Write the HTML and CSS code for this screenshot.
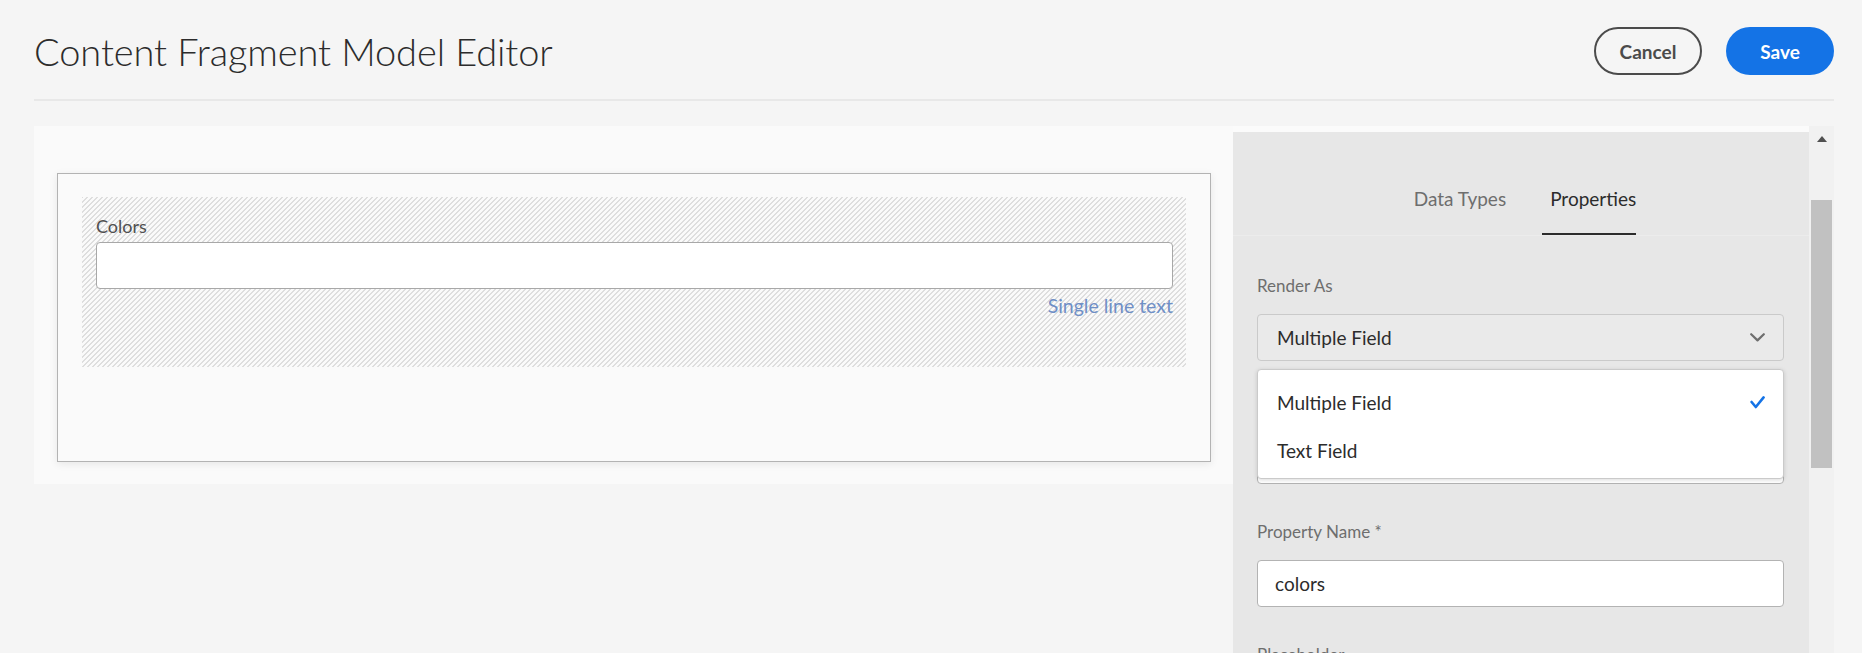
FILE: index.html
```html
<!DOCTYPE html>
<html lang="en">
<head>
<meta charset="utf-8">
<title>Content Fragment Model Editor</title>
<link rel="stylesheet" href="styles.css">
</head>
<body>
<div class="app">
  <header class="topbar">
    <h1 class="title">Content Fragment Model Editor</h1>
    <div class="actions">
      <button class="btn btn-secondary">Cancel</button>
      <button class="btn btn-primary">Save</button>
    </div>
  </header>
  <main class="workspace">
    <section class="canvas">
      <div class="model-card">
        <div class="field-drop">
          <div class="field-label">Colors</div>
          <div class="field-preview"></div>
          <div class="field-type">Single line text</div>
        </div>
      </div>
    </section>
    <aside class="panel">
      <nav class="tabs">
        <div class="tab">Data Types</div>
        <div class="tab tab-active">Properties</div>
      </nav>
      <div class="panel-body">
        <div class="form-field">
          <div class="form-label">Render As</div>
          <div class="select-wrap">
            <div class="select">
              <span>Multiple Field</span>
              <svg class="chevron" width="15" height="9" viewBox="0 0 15 9"><path d="M1.2 1.2 L7.5 7.4 L13.8 1.2" fill="none" stroke="#6e6e6e" stroke-width="2.2" stroke-linecap="round" stroke-linejoin="round"/></svg>
            </div>
            <div class="popover">
              <div class="menu-item">
                <span>Multiple Field</span>
                <svg class="check" width="15" height="13" viewBox="0 0 15 13"><path d="M1.6 6 L5.8 11 L13.6 1.4" fill="none" stroke="#1473e6" stroke-width="2.6" stroke-linecap="round" stroke-linejoin="round"/></svg>
              </div>
              <div class="menu-item"><span>Text Field</span></div>
            </div>
          </div>
        </div>
        <div class="form-field">
          <div class="form-label form-label-hidden"></div>
          <div class="textfield"></div>
        </div>
        <div class="form-field">
          <div class="form-label">Property Name *</div>
          <div class="textfield">colors</div>
        </div>
        <div class="form-field">
          <div class="form-label">Placeholder</div>
          <div class="textfield"></div>
        </div>
      </div>
    </aside>
    <div class="scrollbar">
      <div class="scroll-arrow"></div>
      <div class="scroll-thumb"></div>
    </div>
  </main>
</div>
</body>
</html>
```

FILE: styles.css
```css
html, body {
  margin: 0;
  height: 100%;
}

body {
  background: #f5f5f5;
  font-family: Lato, "Open Sans", "Liberation Sans", sans-serif;
  color: #2c2c2c;
  overflow: hidden;
}

.app {
  padding: 0 28px 0 34px;
}

/* ---------- top bar ---------- */
.topbar {
  box-sizing: border-box;
  height: 101px;
  padding-top: 3px;
  border-bottom: 2px solid #e8e8e8;
  display: flex;
  align-items: center;
  justify-content: space-between;
}

.title {
  margin: 0;
  font-weight: 300;
  font-size: 38px;
  line-height: 48px;
  letter-spacing: -0.1px;
  color: #2c2c2c;
}

.actions {
  display: flex;
  gap: 24px;
}

.btn {
  box-sizing: border-box;
  width: 108px;
  height: 48px;
  border-radius: 24px;
  font-family: Lato, "Open Sans", sans-serif;
  font-weight: 700;
  font-size: 19px;
  line-height: 1;
  padding: 0;
  cursor: pointer;
}

.btn-secondary {
  border: 2px solid #4b4b4b;
  background: transparent;
  color: #4b4b4b;
}

.btn-primary {
  border: none;
  background: #1473e6;
  color: #ffffff;
}

/* ---------- workspace ---------- */
.workspace {
  display: flex;
  margin-top: 25px;
  height: 527px;
}

.canvas {
  flex: 0 0 1199px;
  box-sizing: border-box;
  height: 358px;
  background: #fafafa;
  padding: 47px 22px 0 23px;
}

.model-card {
  box-sizing: border-box;
  height: 289px;
  border: 1px solid #b3b3b3;
  background: #fafafa;
  box-shadow: 0 2px 8px rgba(0, 0, 0, 0.08);
  padding: 23px 24px 0;
}

.field-drop {
  box-sizing: border-box;
  height: 170px;
  padding: 19px 13px 0 14px;
  background: repeating-linear-gradient(135deg, #dedede 0 0.8px, rgba(250, 250, 250, 0) 0.8px 3.5355px);
}

.field-label {
  font-size: 18px;
  line-height: 20px;
  color: #505050;
}

.field-preview {
  box-sizing: border-box;
  margin-top: 6px;
  height: 47px;
  background: #ffffff;
  border: 1px solid #a8a8a8;
  border-radius: 4px;
}

.field-type {
  margin-top: 6px;
  text-align: right;
  font-size: 19.5px;
  line-height: 22px;
  color: #6f8fc6;
}

/* ---------- side panel ---------- */
.panel {
  flex: 0 0 576px;
  border-top: 6px solid #fbfbfb;
  background: #e7e7e7;
}

.tabs {
  box-sizing: border-box;
  height: 104px;
  border-bottom: 1px solid #ececec;
  display: flex;
  justify-content: center;
  align-items: flex-end;
  gap: 36px;
  padding-left: 8px;
}

.tab {
  font-size: 19px;
  line-height: 22px;
  color: #6e6e6e;
  padding-bottom: 23px;
  border-bottom: 2px solid transparent;
}

.tab-active {
  color: #2c2c2c;
  border-bottom-color: #2c2c2c;
  padding-left: 8px;
}

.panel-body {
  padding: 0 25px 0 24px;
}

.form-field {
  margin-top: 38px;
}

.form-field:first-child {
  margin-top: 40px;
}

.form-label {
  font-size: 17px;
  line-height: 20px;
  color: #6e6e6e;
  margin-bottom: 18px;
}

.form-label-hidden {
  height: 20px;
}

.select-wrap {
  position: relative;
}

.select {
  box-sizing: border-box;
  height: 47px;
  border: 1px solid #cacaca;
  border-radius: 4px;
  background: #eaeaea;
  display: flex;
  align-items: center;
  justify-content: space-between;
  padding: 0 18px 0 19px;
  font-size: 19px;
  color: #2c2c2c;
}

.popover {
  position: absolute;
  left: 0;
  right: 0;
  top: calc(100% + 8px);
  z-index: 2;
  box-sizing: border-box;
  height: 110px;
  padding-top: 8px;
  background: #ffffff;
  border: 1px solid #cacaca;
  border-radius: 4px;
  box-shadow: 0 1px 4px rgba(0, 0, 0, 0.15);
}

.menu-item {
  height: 48px;
  display: flex;
  align-items: center;
  justify-content: space-between;
  padding: 0 18px 0 19px;
  font-size: 19px;
  color: #2c2c2c;
}

.textfield {
  box-sizing: border-box;
  height: 47px;
  border: 1px solid #b3b3b3;
  border-radius: 4px;
  background: #ffffff;
  padding: 0 17px;
  display: flex;
  align-items: center;
  font-size: 19px;
  color: #2c2c2c;
}

/* ---------- scrollbar ---------- */
.scrollbar {
  flex: 0 0 25px;
  background: #f1f1f1;
  display: flex;
  flex-direction: column;
  align-items: center;
}

.scroll-arrow {
  margin-top: 10px;
  width: 0;
  height: 0;
  border-left: 5px solid transparent;
  border-right: 5px solid transparent;
  border-bottom: 6px solid #505050;
}

.scroll-thumb {
  margin-top: 58px;
  width: 21px;
  height: 268px;
  background: #c1c1c1;
}
```
